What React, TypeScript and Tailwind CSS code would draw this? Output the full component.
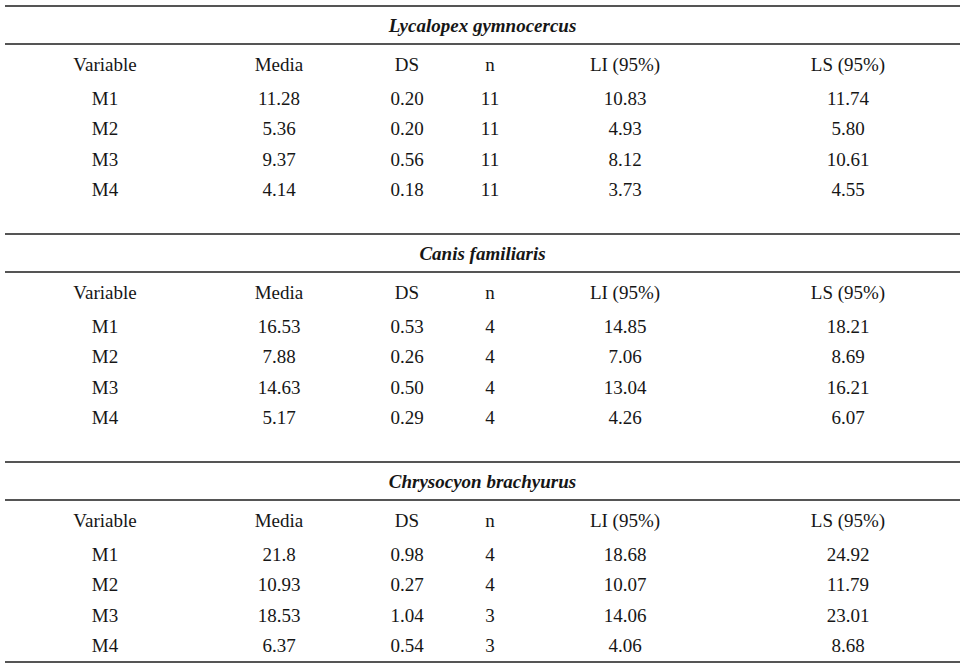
const sections = [
  {
    title: 'Lycalopex gymnocercus',
    rows: [
      ['M1', '11.28', '0.20', '11', '10.83', '11.74'],
      ['M2', '5.36', '0.20', '11', '4.93', '5.80'],
      ['M3', '9.37', '0.56', '11', '8.12', '10.61'],
      ['M4', '4.14', '0.18', '11', '3.73', '4.55'],
    ],
  },
  {
    title: 'Canis familiaris',
    rows: [
      ['M1', '16.53', '0.53', '4', '14.85', '18.21'],
      ['M2', '7.88', '0.26', '4', '7.06', '8.69'],
      ['M3', '14.63', '0.50', '4', '13.04', '16.21'],
      ['M4', '5.17', '0.29', '4', '4.26', '6.07'],
    ],
  },
  {
    title: 'Chrysocyon brachyurus',
    rows: [
      ['M1', '21.8', '0.98', '4', '18.68', '24.92'],
      ['M2', '10.93', '0.27', '4', '10.07', '11.79'],
      ['M3', '18.53', '1.04', '3', '14.06', '23.01'],
      ['M4', '6.37', '0.54', '3', '4.06', '8.68'],
    ],
  },
]

const header = ['Variable', 'Media', 'DS', 'n', 'LI (95%)', 'LS (95%)']

function Row({ cells, className }: { cells: string[]; className: string }) {
  return (
    <div className={`grid grid-cols-[200px_148px_108px_58px_212px_1fr] items-center text-center ${className}`}>
      {cells.map((c, i) => (
        <div key={i} className={i === 5 ? 'pl-[5px]' : ''}>{c}</div>
      ))}
    </div>
  )
}

export default function App() {
  return (
    <div
      className="min-h-[667px] w-[965px] bg-white px-[5px] pt-[5px] text-[19px] leading-none text-[#161616]"
      style={{ fontFamily: '"Liberation Serif", "Times New Roman", serif' }}
    >
      {sections.map((s, si) => (
        <div key={s.title} className={si < 2 ? 'mb-[28px]' : ''}>
          <div className="h-[2px] bg-[#555]" />
          <div className="flex h-[36px] items-center justify-center font-bold italic">{s.title}</div>
          <div className="h-[2px] bg-[#555]" />
          <Row cells={header} className="h-[38px]" />
          {s.rows.map((r) => (
            <Row key={r[0]} cells={r} className="h-[30.5px]" />
          ))}
          {si === 2 && <div className="h-[2px] bg-[#555]" />}
        </div>
      ))}
    </div>
  )
}
